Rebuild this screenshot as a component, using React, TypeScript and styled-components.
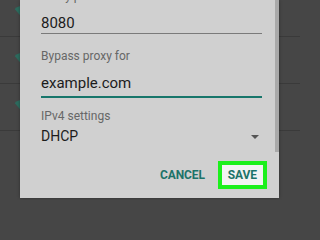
import React from "react";
import styled, { createGlobalStyle } from "styled-components";

const GlobalStyle = createGlobalStyle`
  html, body {
    margin: 0;
    padding: 0;
    background: #464646;
    overflow: hidden;
  }
  body {
    font-family: Roboto, "Noto Sans", "Liberation Sans", sans-serif;
  }
`;

const networks = ["home", "office", "guest", "cafe", "lab"];

const WifiGlyph: React.FC = () => (
  <svg width="22" height="18" viewBox="0 0 24 20">
    <path d="M12 19 L0.5 5.5 C7 0 17 0 23.5 5.5 Z" fill="#2c6b5e" />
  </svg>
);

const App: React.FC = () => {
  return (
    <>
      <GlobalStyle />
      <Screen>
        <NetworkList>
          {networks.map((n, i) => (
            <NetworkRow key={n} $last={i >= 3}>
              {i < 3 && <WifiGlyph />}
            </NetworkRow>
          ))}
        </NetworkList>

        <Dialog>
          <ScrollArea>
            <Fields>
              <Field>
                <Label>Proxy port</Label>
                <InputText>8080</InputText>
                <Underline />
              </Field>
              <Field $gap={15}>
                <Label>Bypass proxy for</Label>
                <InputText $spaced>example.com</InputText>
                <Underline $active />
              </Field>
              <Field $gap={11}>
                <Label>IPv4 settings</Label>
                <Spinner>
                  <SpinnerValue>DHCP</SpinnerValue>
                  <Caret />
                </Spinner>
              </Field>
            </Fields>
            <ScrollBar />
          </ScrollArea>

          <Actions>
            <TextButton>CANCEL</TextButton>
            <Highlight>
              <TextButton>SAVE</TextButton>
            </Highlight>
          </Actions>
        </Dialog>
      </Screen>
    </>
  );
};

export default App;

const Screen = styled.div`
  position: relative;
  width: 300px;
  height: 200px;
  overflow: hidden;
  background: #464646;
`;

const NetworkList = styled.div`
  display: flex;
  flex-direction: column;
  margin-top: -10px;
`;

const NetworkRow = styled.div<{ $last?: boolean }>`
  height: 47px;
  box-sizing: border-box;
  display: flex;
  align-items: center;
  padding-left: 14px;
  border-bottom: 1px solid ${(p) => (p.$last ? "transparent" : "#3a3a3a")};
`;

const Dialog = styled.div`
  position: absolute;
  left: 20px;
  top: 0;
  width: 259px;
  height: 198px;
  background: #d0d0d0;
  display: flex;
  flex-direction: column;
  box-shadow: 0 0 3px rgba(0, 0, 0, 0.35);
`;

const ScrollArea = styled.div`
  height: 152px;
  display: flex;
  overflow: hidden;
`;

const Fields = styled.div`
  flex: 1;
  display: flex;
  flex-direction: column;
  padding: 0 13px 0 21px;
  margin-top: -11px;
`;

const ScrollBar = styled.div`
  width: 4px;
  background: #a9a9a9;
`;

const Field = styled.div<{ $gap?: number }>`
  display: flex;
  flex-direction: column;
  margin-top: ${(p) => p.$gap ?? 0}px;
`;

const Label = styled.div`
  font-size: 12px;
  line-height: 14px;
  color: #676767;
`;

const InputText = styled.div<{ $spaced?: boolean }>`
  font-size: 15px;
  line-height: 20px;
  color: #1c1c1c;
  margin-top: ${(p) => (p.$spaced ? 10 : 10)}px;
  padding-bottom: ${(p) => (p.$spaced ? 3 : 0)}px;
`;

const Underline = styled.div<{ $active?: boolean }>`
  height: ${(p) => (p.$active ? 2 : 1)}px;
  background: ${(p) => (p.$active ? "#17766b" : "#7a7a7a")};
`;

const Spinner = styled.div`
  display: flex;
  align-items: center;
  justify-content: space-between;
  margin-top: 4px;
  padding-right: 3px;
`;

const SpinnerValue = styled.div`
  font-size: 14px;
  line-height: 18px;
  color: #1c1c1c;
`;

const Caret = styled.div`
  width: 0;
  height: 0;
  border-left: 4px solid transparent;
  border-right: 4px solid transparent;
  border-top: 4px solid #555;
  margin-top: 1px;
`;

const Actions = styled.div`
  flex: 1;
  display: flex;
  align-items: center;
  justify-content: flex-end;
  gap: 13px;
  padding-right: 12px;
  padding-top: 0px;
`;

const TextButton = styled.div`
  font-size: 12px;
  font-weight: 700;
  line-height: 14px;
  color: #1d7369;
  letter-spacing: -0.1px;
`;

const Highlight = styled.div`
  border: 4px solid #1cf01c;
  background: #f3f3f3;
  padding: 3px 6px 3px 6px;
  display: flex;
  align-items: center;
`;
